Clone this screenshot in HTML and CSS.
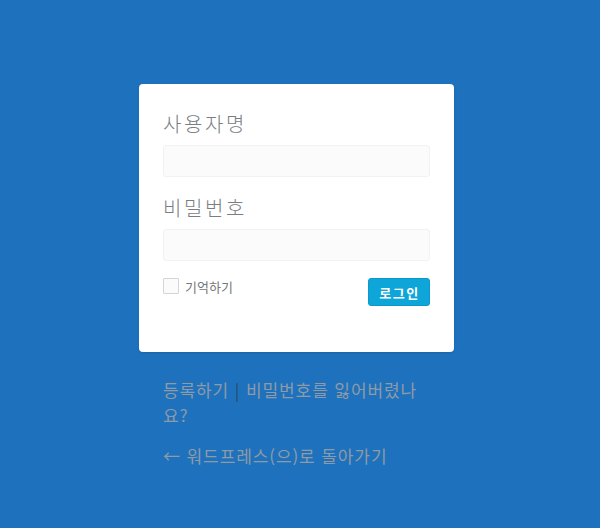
FILE: index.html
```html
<!DOCTYPE html>
<html lang="ko">
<head>
<meta charset="utf-8">
<link rel="stylesheet" href="styles.css">
</head>
<body>
<div class="login">
  <form class="card">
    <label class="label">사용자명</label>
    <div class="input"></div>
    <label class="label label2">비밀번호</label>
    <div class="input"></div>
    <div class="row">
      <div class="remember"><span class="box"></span><span>기억하기</span></div>
      <button type="button" class="btn">로그인</button>
    </div>
  </form>
  <p class="nav"><a>등록하기</a><span class="sep"> | </span><a>비밀번호를 잃어버렸나요?</a></p>
  <p class="back"><a>← 워드프레스(으)로 돌아가기</a></p>
</div>
</body>
</html>
```
FILE: styles.css
```css
html, body {
  margin: 0;
  padding: 0;
  background: #1e72bd;
  font-family: "Noto Sans CJK KR", "Noto Sans", sans-serif;
}
.login {
  width: 315px;
  margin-left: 139px;
  padding-top: 84px;
}
.card {
  display: flex;
  flex-direction: column;
  background: #fff;
  border-radius: 4px;
  padding: 25px 24px 46px;
  box-shadow: 0 1px 3px rgba(0,0,0,0.13);
}
.label {
  font-size: 20px;
  line-height: 30px;
  color: #7a7e82;
  font-weight: 300;
  letter-spacing: 2.6px;
  height: 36px;
}
.label2 {
  margin-top: 16px;
}
.input {
  height: 30px;
  background: #fbfbfb;
  border: 1px solid #f2f2f2;
  border-radius: 3px;
}
.row {
  display: flex;
  justify-content: space-between;
  align-items: flex-start;
  margin-top: 17px;
}
.remember {
  display: flex;
  align-items: flex-start;
  gap: 6px;
  font-size: 13px;
  line-height: 18px;
  color: #72777c;
}
.box {
  width: 14px;
  height: 14px;
  border: 1px solid #d5d5d5;
  background: #fbfbfb;
  border-radius: 1px;
}
.btn {
  width: 62px;
  height: 28px;
  background: #0ea5d8;
  border: 1px solid #0b9acb;
  border-radius: 3px;
  color: #fff;
  font-family: inherit;
  font-weight: 700;
  font-size: 13px;
  padding: 0 0 0 1px;
  letter-spacing: 1.5px;
}
.nav, .back {
  margin: 0;
  padding: 0 24px;
  font-size: 17px;
  line-height: 25px;
  letter-spacing: 0.9px;
  color: #8f9aa6;
}
.nav {
  margin-top: 25px;
}
.back {
  margin-top: 16px;
}
.sep {
  color: #2b4b6b;
}
a { color: #8f9aa6; }
```
